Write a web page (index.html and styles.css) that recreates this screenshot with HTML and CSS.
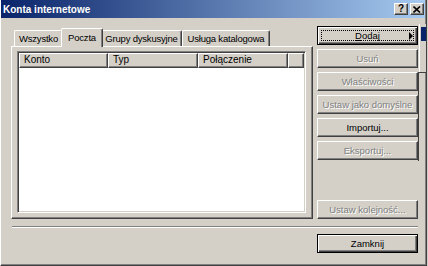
FILE: index.html
```html
<!DOCTYPE html>
<html lang="pl">
<head>
  <meta charset="UTF-8">
  <title>Konta internetowe</title>
  <link rel="stylesheet" href="styles.css">
</head>
<body>
  <div class="okno">
    <div class="pasek">
      <span class="tytul">Konta internetowe</span>
      <div class="przyciski-okna">
        <span class="przycisk-okna pomoc">?</span>
        <span class="przycisk-okna">
          <svg width="8" height="7" viewBox="0 0 8 7"><path d="M0.5 0.5 L7 6.5 M7 0.5 L0.5 6.5" stroke="#000" stroke-width="1.6"/></svg>
        </span>
      </div>
    </div>

    <div class="tresc">
      <div class="lewa">
        <div class="zakladki">
          <div class="zakladka z-wszystko">Wszystko</div>
          <div class="zakladka z-poczta wybrana">Poczta</div>
          <div class="zakladka z-grupy">Grupy dyskusyjne</div>
          <div class="zakladka z-usluga">Usługa katalogowa</div>
        </div>
        <div class="panel">
          <div class="lista">
            <div class="naglowek">
              <div class="kolumna k1">Konto</div>
              <div class="kolumna k2">Typ</div>
              <div class="kolumna k3">Połączenie</div>
              <div class="kolumna reszta"></div>
            </div>
          </div>
        </div>
      </div>

      <div class="prawa">
        <div class="przycisk domyslny dodaj"><span class="ramka"></span><span><u>D</u>odaj</span><span class="strzalka"></span></div>
        <div class="przycisk wylaczony">Usuń</div>
        <div class="przycisk wylaczony">Właściwości</div>
        <div class="przycisk wylaczony">Ustaw jako domyślne</div>
        <div class="przycisk">Importuj...</div>
        <div class="przycisk wylaczony">Eksportuj...</div>
        <div class="przycisk wylaczony dol">Ustaw kolejność...</div>
      </div>
    </div>

    <div class="separator"></div>

    <div class="stopka">
      <div class="przycisk domyslny">Zamknij</div>
    </div>

    <!-- rozwiniete podmenu przycisku Dodaj, przyciete przez krawedz ekranu -->
    <div class="menu">
      <div class="menu-pozycja"></div>
    </div>
    <div class="menu-cien"></div>
  </div>
</body>
</html>
```

FILE: styles.css
```css
/* okno dialogowe w stylu Windows 2000 */
* {
  box-sizing: border-box;
}
body {
  margin: 0;
  background: #d4d0c8;
  font-family: "Liberation Sans", Arial, sans-serif;
  font-size: 10px;
  color: #000;
}
.okno {
  position: relative;
  width: 427px;
  height: 266px;
  background: #d4d0c8;
  border-left: 1px solid #fff;
  border-right: 1px solid #404040;
  border-bottom: 1px solid #404040;
  box-shadow: inset -1px -1px 0 #808080;
  display: flex;
  flex-direction: column;
  overflow: hidden;
}

/* pasek tytulu */
.pasek {
  height: 18px;
  margin-right: 1px;
  background: linear-gradient(to right, #0a246a, #a6caf0);
  display: flex;
  align-items: center;
  justify-content: space-between;
}
.tytul {
  color: #fff;
  font-weight: bold;
  font-size: 10px;
  padding-left: 2px;
}
.przyciski-okna {
  display: flex;
  gap: 2px;
  margin-right: 1px;
}
.przycisk-okna {
  width: 14px;
  height: 12px;
  background: #d4d0c8;
  border: 1px solid;
  border-color: #fff #404040 #404040 #fff;
  box-shadow: inset -1px -1px 0 #808080;
  display: flex;
  align-items: center;
  justify-content: center;
}
.pomoc {
  font-weight: bold;
  font-size: 10px;
  line-height: 10px;
}

/* tresc */
.tresc {
  display: flex;
  gap: 4px;
  padding: 8px 0 0 10px;
}
.lewa {
  width: 302px;
  display: flex;
  flex-direction: column;
}
.zakladki {
  height: 20px;
  display: flex;
  align-items: flex-end;
  padding-left: 3px;
}
.zakladka {
  height: 16px;
  padding-top: 2px;
  border-left: 1px solid #fff;
  border-top: 1px solid #fff;
  border-right: 1px solid #404040;
  border-radius: 2px 2px 0 0;
  box-shadow: inset -1px 0 0 #808080;
  white-space: nowrap;
  line-height: 12px;
  font-size: 9.5px;
  text-align: center;
  letter-spacing: -0.2px;
}
.z-wszystko { width: 49px; }
.z-poczta { width: 38px; }
.z-grupy { width: 81px; }
.z-usluga { width: 88px; }
.zakladka.wybrana {
  width: 42px;
  height: 19px;
  margin: 0 -2px -1px;
  padding-top: 3px;
  background: #d4d0c8;
  position: relative;
  z-index: 1;
}
.panel {
  height: 173px;
  background: #d4d0c8;
  border: 1px solid;
  border-color: #fff #404040 #404040 #fff;
  box-shadow: inset -1px -1px 0 #808080;
  padding: 4px 6px 5px 5px;
}
.lista {
  height: 100%;
  background: #fff;
  border: 1px solid;
  border-color: #808080 #fff #fff #808080;
  box-shadow: inset 1px 1px 0 #404040, inset -1px -1px 0 #d4d0c8;
  padding: 1px;
}
.naglowek {
  display: flex;
  height: 15px;
}
.kolumna {
  background: #d4d0c8;
  border: 1px solid;
  border-color: #fff #404040 #404040 #fff;
  box-shadow: inset -1px -1px 0 #808080;
  padding-left: 4px;
  line-height: 12px;
}
.k1 { width: 89px; }
.k2 { width: 90px; }
.k3 { width: 90px; }
.reszta { flex: 1; }

/* przyciski po prawej */
.prawa {
  width: 101px;
  height: 193px;
  display: flex;
  flex-direction: column;
  gap: 4px;
}
.przycisk {
  position: relative;
  width: 101px;
  height: 19px;
  background: #d4d0c8;
  border: 1px solid;
  border-color: #fff #404040 #404040 #fff;
  box-shadow: inset -1px -1px 0 #808080;
  display: flex;
  align-items: center;
  justify-content: center;
  white-space: nowrap;
  font-size: 9.5px;
}
.przycisk.domyslny {
  border: 1px solid #000;
  box-shadow: inset 1px 1px 0 #fff, inset -1px -1px 0 #404040, inset -2px -2px 0 #808080;
}
.przycisk.wylaczony {
  color: #808080;
  text-shadow: 1px 1px 0 #fff;
}
.przycisk.dol {
  margin-top: auto;
}
.ramka {
  position: absolute;
  inset: 3px;
  border: 1px dotted #000;
}
.strzalka {
  position: absolute;
  right: 4px;
  top: 5px;
  border-left: 4px solid #000;
  border-top: 4px solid transparent;
  border-bottom: 4px solid transparent;
}

.separator {
  margin: 7px 0 0 11px;
  width: 406px;
  border-top: 1px solid #808080;
  border-bottom: 1px solid #fff;
}
.stopka {
  display: flex;
  justify-content: flex-end;
  padding: 6px 8px 0 0;
}

/* podmenu przy prawej krawedzi */
.menu {
  position: absolute;
  left: 417px;
  top: 24px;
  width: 40px;
  height: 48px;
  background: #d4d0c8;
  border-left: 1px solid #d4d0c8;
  box-shadow: inset 1px 0 0 #fff;
  padding: 3px 0 0 2px;
}
.menu-pozycja {
  height: 14px;
  background: #0a246a;
}
.menu-cien {
  position: absolute;
  left: 417px;
  top: 72px;
  width: 20px;
  height: 89px;
  border-left: 1px solid #404040;
  border-top: 1px solid #404040;
}
```
